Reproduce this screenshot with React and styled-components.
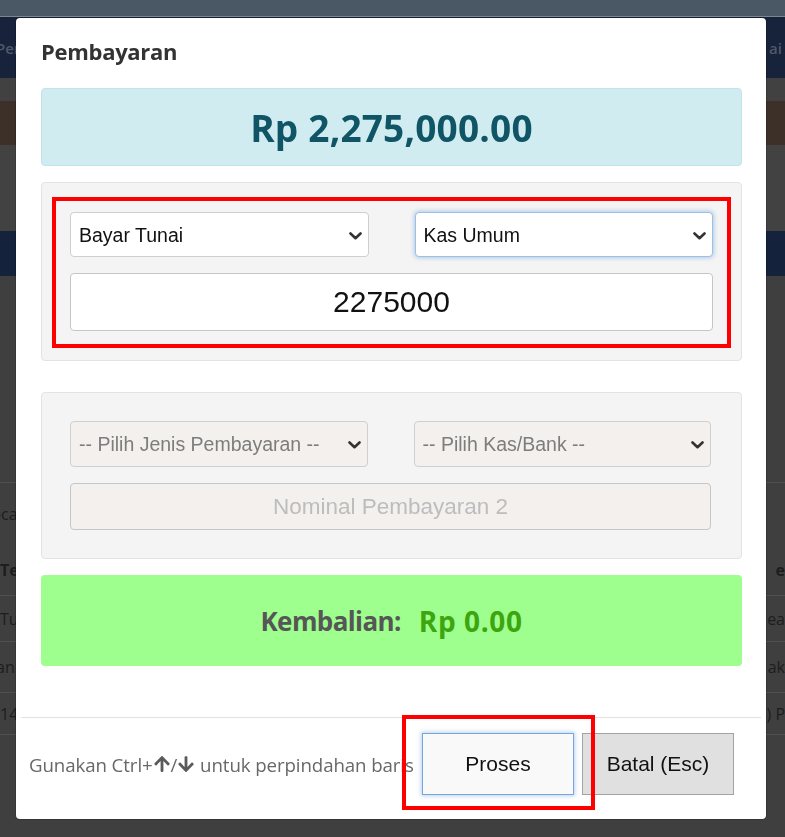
import React from 'react'
import styled, { createGlobalStyle } from 'styled-components'
import { FaArrowUp, FaArrowDown } from 'react-icons/fa'

const GlobalStyle = createGlobalStyle`
  html, body {
    margin: 0;
    padding: 0;
    background: #3f3f3f;
    overflow: hidden;
  }
  * { box-sizing: border-box; }
`

/* ---------- dimmed page behind the modal ---------- */

const Page = styled.div`
  width: 785px;
  height: 837px;
  font-family: "Open Sans", sans-serif;
`

const TopBar = styled.div`
  height: 17px;
  background: #4a5866;
  border-bottom: 1px solid #7d8791;
`

const NavBand = styled.div`
  height: 61px;
  background: #17233b;
  display: flex;
  align-items: center;
  justify-content: space-between;
  color: #4f5868;
  font-size: 15px;
  font-weight: 600;
  padding: 0 3px 0 0;
  span:first-child { margin-left: -4px; }
`

const Band = styled.div`
  height: ${p => p.$h}px;
  background: ${p => p.$bg};
`

const Rows = styled.div`
  padding-top: 176px;
`

const Row = styled.div`
  height: ${p => p.$h}px;
  display: flex;
  align-items: center;
  justify-content: space-between;
  border-bottom: ${p => (p.$line ? '1px solid #505050' : 'none')};
  color: #1d1d1d;
  font-size: 16px;
  font-weight: ${p => (p.$bold ? 700 : 400)};
  span:first-child { margin-left: ${p => p.$shift || 0}px; }
`

/* ---------- modal ---------- */

const Overlay = styled.div`
  position: fixed;
  inset: 0;
  padding: 18px 0 0 16px;
`

const Modal = styled.div`
  width: 750px;
  background: #fff;
  border-radius: 4px;
  box-shadow: 0 0 0 1px rgba(0, 0, 0, 0.15);
  position: relative;
`

const Header = styled.div`
  padding: 19px 25px 0;
`

const Title = styled.h4`
  margin: 0;
  font-family: "Open Sans", sans-serif;
  font-size: 22px;
  line-height: 29px;
  font-weight: 700;
  color: #333;
  letter-spacing: -0.3px;
`

const Body = styled.div`
  padding: 22px 24px 51px 25px;
  display: flex;
  flex-direction: column;
`

const TotalBox = styled.div`
  height: 78px;
  display: flex;
  align-items: center;
  justify-content: center;
  background: #d1ecf1;
  border: 1px solid #bee5eb;
  border-radius: 4px;
  color: #0f5566;
  font-family: "Open Sans", sans-serif;
  font-size: 37px;
  font-weight: 700;
  letter-spacing: 0.2px;
`

const Well = styled.div`
  margin-top: ${p => p.$mt}px;
  padding: ${p => p.$pad};
  background: #f4f4f4;
  border: 1px solid #e3e3e3;
  border-radius: 4px;
`

const Highlight = styled.div`
  border: 4px solid #ff0000;
  padding: 11px 14px 13px;
`

const SelectRow = styled.div`
  display: grid;
  grid-template-columns: 1fr 1fr;
  gap: 46px;
`

const SelectWrap = styled.div`
  position: relative;
  svg {
    position: absolute;
    right: 7px;
    top: 50%;
    margin-top: -3px;
    pointer-events: none;
  }
`

const Select = styled.select`
  appearance: none;
  display: block;
  height: ${p => p.$h}px;
  width: 100%;
  padding: 0 30px 0 8px;
  font-family: "Liberation Sans", Arial, sans-serif;
  font-size: 19.5px;
  color: ${p => (p.disabled ? '#7d7d7d' : '#111')};
  background-color: ${p => (p.disabled ? '#f3f0ee' : '#fff')};
  border: 1px solid ${p => (p.$focus ? '#9cc0e6' : '#cfcfcf')};
  border-radius: 4px;
  box-shadow: ${p => (p.$focus ? '0 0 4px 1px rgba(120, 170, 225, 0.55)' : 'none')};
  outline: none;
  opacity: 1;
`

const Chevron = () => (
  <svg width="13" height="8" viewBox="0 0 13 8">
    <path d="M1.5 1.5 L6.5 6.2 L11.5 1.5" fill="none" stroke="#333" strokeWidth="2.6" strokeLinecap="round" strokeLinejoin="round" />
  </svg>
)

const Dropdown = ({ h, focus, disabled, label }) => (
  <SelectWrap>
    <Select $h={h} $focus={focus} disabled={disabled} defaultValue="v">
      <option value="v">{label}</option>
    </Select>
    <Chevron />
  </SelectWrap>
)

const AmountInput = styled.input`
  display: block;
  width: 100%;
  height: ${p => p.$h}px;
  margin-top: 16px;
  font-family: "Liberation Sans", Arial, sans-serif;
  font-size: ${p => p.$size}px;
  text-align: center;
  color: #111;
  background: ${p => (p.disabled ? '#f3f0ee' : '#fff')};
  border: 1px solid #c6c6c6;
  border-radius: 4px;
  outline: none;
  &::placeholder { color: #bdbdbd; }
`

const ChangeBox = styled.div`
  margin-top: 16px;
  height: 91px;
  display: flex;
  align-items: center;
  justify-content: center;
  gap: 18px;
  background: #9efe8e;
  border-radius: 4px;
  font-family: "Open Sans", sans-serif;
  font-weight: 700;
`

const ChangeLabel = styled.span`
  color: #565656;
  font-size: 26px;
  letter-spacing: -0.6px;
`

const ChangeValue = styled.span`
  color: #3da50e;
  font-size: 28px;
  letter-spacing: 0.6px;
`

const Footer = styled.div`
  margin: 0 5px;
  border-top: 1px solid #e2e2e2;
  padding: 15px 27px 24px 8px;
  display: flex;
  align-items: center;
  justify-content: space-between;
  position: relative;
`

const Hint = styled.p`
  margin: 0;
  font-family: "Open Sans", sans-serif;
  font-size: 18.7px;
  color: #686868;
  display: flex;
  align-items: center;
  white-space: nowrap;
  letter-spacing: -0.1px;
  svg { font-size: 18px; color: #5a5a5a; }
`

const Actions = styled.div`
  display: flex;
  gap: 8px;
`

const Button = styled.button`
  width: 152px;
  height: 62px;
  font-family: "Liberation Sans", Arial, sans-serif;
  font-size: 21px;
  color: #111;
  background: ${p => (p.$primary ? '#f9f9f9' : '#e0e0e0')};
  border: 1px solid ${p => (p.$primary ? '#77a6dc' : '#a3a3a3')};
  box-shadow: ${p => (p.$primary ? '0 0 4px 1px rgba(120, 170, 225, 0.5)' : 'none')};
  border-radius: 0;
  outline: none;
`

const Marker = styled.div`
  position: absolute;
  left: 381px;
  top: -3px;
  width: 193px;
  height: 95px;
  border: 4px solid #ff0000;
  pointer-events: none;
`

export default function App() {
  return (
    <>
      <GlobalStyle />
      <Page>
        <TopBar />
        <NavBand>
          <span>Pembelian</span>
          <span>ai</span>
        </NavBand>
        <Band $h={23} $bg="#414141" />
        <Band $h={44} $bg="#3d3029" />
        <Band $h={86} $bg="#424242" />
        <Band $h={45} $bg="#15223b" />
        <Rows>
          <Row $h={31} $line />
          <Row $h={62} $shift={-8}><span>eca</span><span></span></Row>
          <Row $h={51} $line $bold><span>Te</span><span>e</span></Row>
          <Row $h={46} $line><span>Tu</span><span>ea</span></Row>
          <Row $h={51} $line $shift={-4}><span>an</span><span>ak</span></Row>
          <Row $h={42} $line><span>14</span><span>) P</span></Row>
        </Rows>
      </Page>

      <Overlay>
        <Modal>
          <Header>
            <Title>Pembayaran</Title>
          </Header>
          <Body>
            <TotalBox>Rp 2,275,000.00</TotalBox>

            <Well $mt={16} $pad="14px 10px 12px">
              <Highlight>
                <SelectRow>
                  <Dropdown h={45} label="Bayar Tunai" />
                  <Dropdown h={45} focus label="Kas Umum" />
                </SelectRow>
                <AmountInput $h={58} $size={30} defaultValue="2275000" />
              </Highlight>
            </Well>

            <Well $mt={31} $pad="28px 30px 28px 28px">
              <SelectRow>
                <Dropdown h={46} disabled label="-- Pilih Jenis Pembayaran --" />
                <Dropdown h={46} disabled label="-- Pilih Kas/Bank --" />
              </SelectRow>
              <AmountInput $h={47} $size={22.5} disabled placeholder="Nominal Pembayaran 2" />
            </Well>

            <ChangeBox>
              <ChangeLabel>Kembalian:</ChangeLabel>
              <ChangeValue>Rp 0.00</ChangeValue>
            </ChangeBox>
          </Body>

          <Footer>
            <Hint>
              Gunakan Ctrl+<FaArrowUp />/<FaArrowDown />&nbsp;untuk perpindahan baris
            </Hint>
            <Actions>
              <Button $primary>Proses</Button>
              <Button>Batal (Esc)</Button>
            </Actions>
            <Marker />
          </Footer>
        </Modal>
      </Overlay>
    </>
  )
}
